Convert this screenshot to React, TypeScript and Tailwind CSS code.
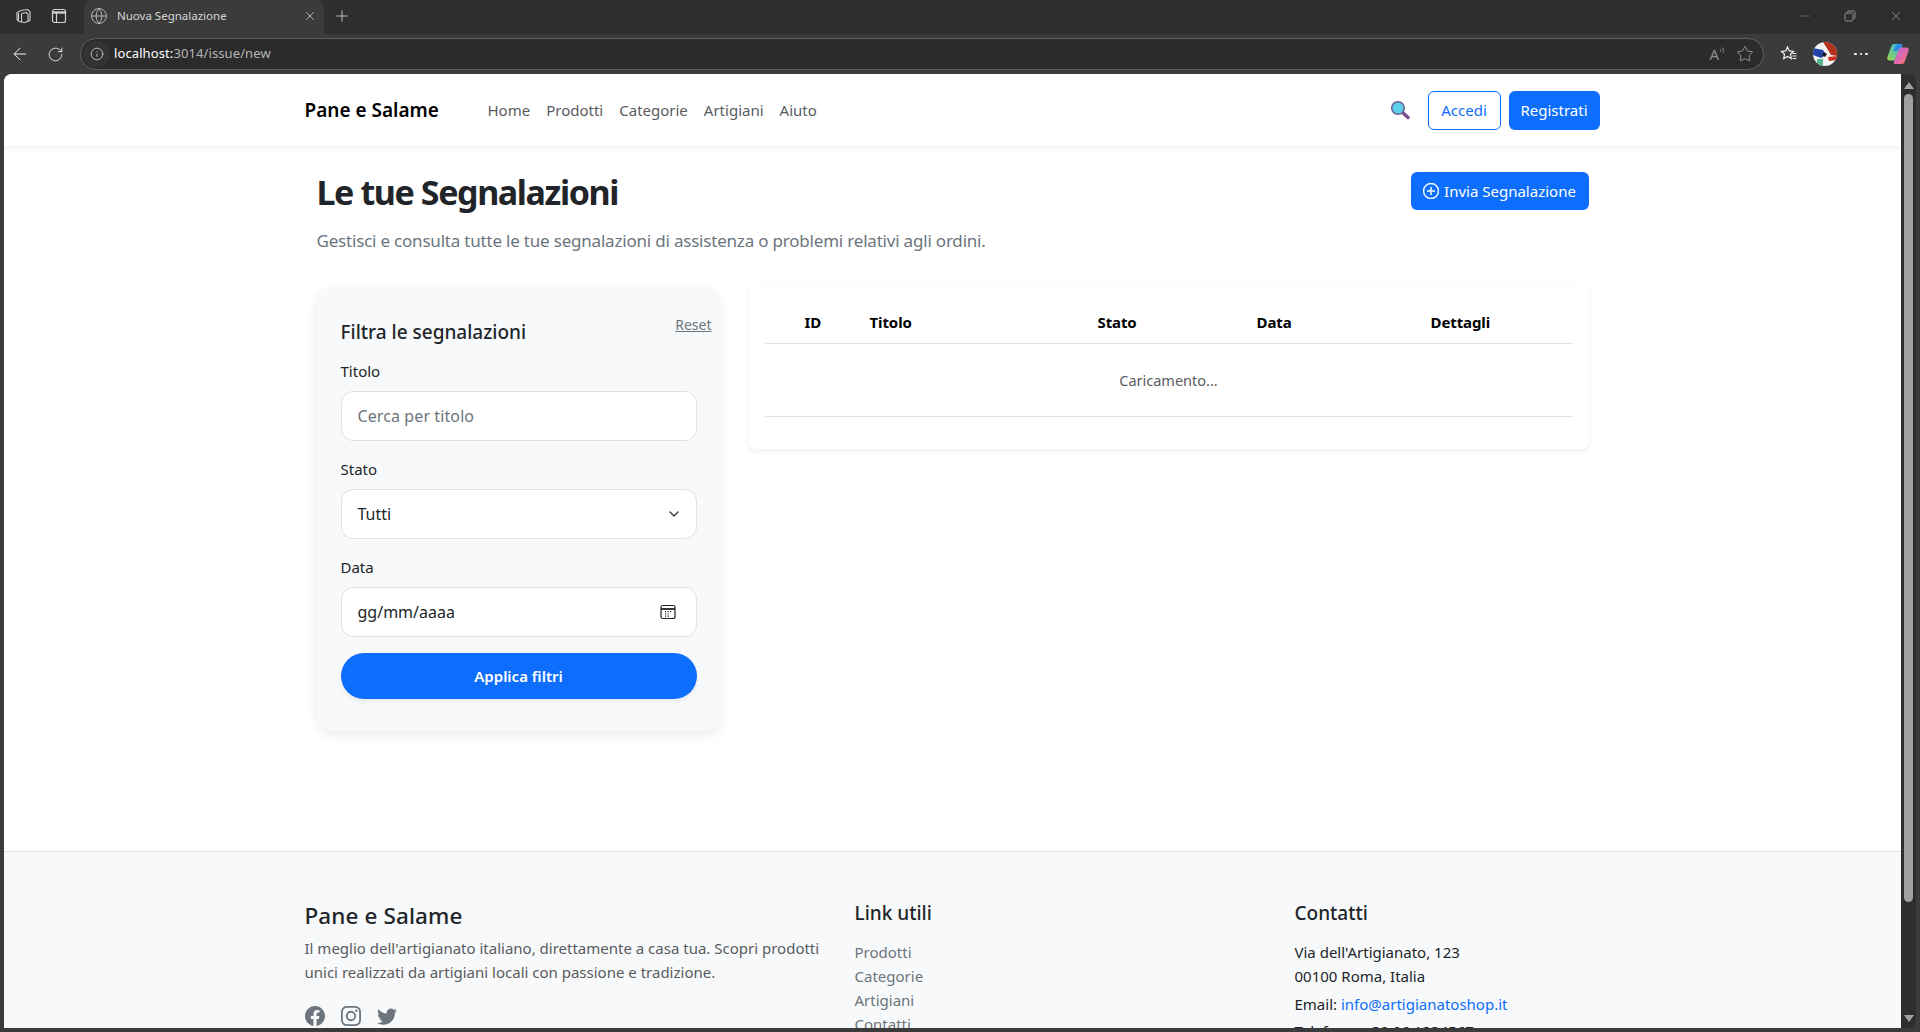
import { ArrowLeft, Globe, Plus, RotateCw, Info, Star, X, Minus, ChevronDown } from "lucide-react";
import { BsFacebook, BsInstagram, BsTwitter, BsPlusCircle } from "react-icons/bs";

const font = { fontFamily: '"Noto Sans", sans-serif' };

function Chrome() {
  return (
    <div className="flex flex-col shrink-0 text-white">
      <div className="h-[34px] bg-[#2e2e2e] flex items-end">
        <div className="w-[84px] h-[34px] flex items-center pl-[15px] pb-[2px] gap-[18px]">
          <svg width="18" height="18" viewBox="0 0 18 18" fill="none" stroke="#cfcfcf" strokeWidth="1.1">
            <path d="M6 3.500l6.500-1 2.500 2v9l-5 2-6-1-2-2v-7z" />
            <path d="M6.500 6.500l5-1 1.500 1.500v8" />
            <path d="M3.500 6v7.500M6.500 6.500v9" />
          </svg>
          <svg width="16" height="16" viewBox="0 0 16 16" fill="none" stroke="#cfcfcf" strokeWidth="1.2">
            <rect x="1.500" y="1.500" width="13" height="13" rx="2" />
            <path d="M1.500 4.500h13" strokeWidth="2.400" />
            <path d="M5.500 5v9.500" />
          </svg>
        </div>
        <div className="w-[240px] h-[34px] bg-[#3b3b3b] rounded-t-[8px] flex items-center pl-[6px] pr-[7px] pb-[2px]">
          <Globe size={18} strokeWidth={1.1} color="#c8c8c8" />
          <span className="ml-[9px] flex-1 text-[11.500px] text-[#d6d6d6]">Nuova Segnalazione</span>
          <X size={14} strokeWidth={1.4} color="#d0d0d0" />
        </div>
        <div className="h-[34px] w-[34px] flex items-center justify-center ml-[1px] pb-[2px]">
          <Plus size={18} strokeWidth={1.1} color="#e0e0e0" />
        </div>
        <div className="flex-1" />
        <div className="flex items-center h-[34px] pr-[16px] gap-[32px] pb-[2px]">
          <Minus size={14} strokeWidth={1} color="#8f8f8f" />
          <svg width="12" height="12" viewBox="0 0 12 12" fill="none" stroke="#8f8f8f" strokeWidth="1">
            <rect x="1" y="3" width="8" height="8" rx="1.200" />
            <path d="M3.500 3V2.200A1.200 1.200 0 0 1 4.700 1H9.600A1.400 1.400 0 0 1 11 2.400V7.300A1.200 1.200 0 0 1 9.800 8.500H9" />
          </svg>
          <X size={16} strokeWidth={1} color="#a8a8a8" />
        </div>
      </div>
      <div className="h-[40px] bg-[#3b3b3b] flex items-center">
        <div className="w-[80px] flex items-center pl-[10px] gap-[17px]">
          <ArrowLeft size={20} strokeWidth={1.2} color="#f0f0f0" />
          <RotateCw size={17} strokeWidth={1.2} color="#f0f0f0" />
        </div>
        <div className="w-[1684px] h-[32px] rounded-full border border-[#5f5f5f] bg-[#2b2b2b] flex items-center pr-[9px]">
          <div className="w-[27px] h-[26px] ml-[2px] rounded-full bg-[#333333] flex items-center justify-center">
            <Info size={14} strokeWidth={1.3} color="#e0e0e0" />
          </div>
          <span className="ml-[4px] text-[13px] text-white tracking-[0.1px]">localhost:<span className="text-[#b4b4b4]">3014/issue/new</span></span>
          <div className="flex-1" />
          <span className="text-[15px] leading-[18px] text-[#8f8f8f]">A</span>
          <svg width="6" height="10" viewBox="0 0 6 10" fill="none" stroke="#8f8f8f" strokeWidth="0.9" className="mb-[6px] mr-[11px]">
            <path d="M1 3c1 .8 1 2 .6 3M3 1.500c1.800 1.500 1.800 4 1 5.500" />
          </svg>
          <Star size={18} strokeWidth={1.2} color="#a0a0a0" />
        </div>
        <div className="flex-1 flex items-center pl-[16px] gap-[15px]">
          <svg width="18" height="18" viewBox="0 0 18 18" fill="none" stroke="#f5f5f5" strokeWidth="1.2">
            <path d="M7.500 2l1.800 3.900 4.200.5-3 2.900.8 4.200-3.800-2.100-3.800 2.100.8-4.200-3-2.900 4.200-.5z" />
            <path d="M12.500 8.500h4M12.500 11h4M12.500 13.500h4" />
          </svg>
          <svg width="24" height="24" viewBox="0 0 24 24">
            <defs><clipPath id="av"><circle cx="12" cy="12" r="12" /></clipPath></defs>
            <g clipPath="url(#av)">
              <rect width="24" height="24" fill="#f2f2f2" />
              <path d="M10 0h14v14l-6-1-3-5z" fill="#b5301c" />
              <path d="M0 6l10 2 3 5-5 3-8-3z" fill="#2244a8" />
              <path d="M4 17l6 0 0 7-6 0z" fill="#58b58e" />
              <path d="M15 15l9-1v4l-8 1z" fill="#c9301f" />
              <path d="M11 10l3 2-2 3-3-2z" fill="#1a1a2a" />
            </g>
          </svg>
          <div className="flex gap-[3px] ml-[2px] mr-[3px]">
            <span className="w-[2.500px] h-[2.500px] bg-white rounded-full" />
            <span className="w-[2.500px] h-[2.500px] bg-white rounded-full" />
            <span className="w-[2.500px] h-[2.500px] bg-white rounded-full" />
          </div>
          <svg width="24" height="24" viewBox="0 0 24 24" fill="none">
            <defs>
              <linearGradient id="c1" x1="0" y1="0" x2="1" y2="1"><stop offset="0" stopColor="#35c1f1" /><stop offset="0.5" stopColor="#2b7fe8" /><stop offset="1" stopColor="#3fd18c" /></linearGradient>
              <linearGradient id="c2" x1="0" y1="0" x2="1" y2="1"><stop offset="0" stopColor="#a86be0" /><stop offset="0.6" stopColor="#e86aa8" /><stop offset="1" stopColor="#f9803a" /></linearGradient>
              <linearGradient id="c3" x1="0" y1="1" x2="1" y2="0"><stop offset="0" stopColor="#9ad84a" /><stop offset="1" stopColor="#2fb6e8" /></linearGradient>
            </defs>
            <path d="M8 2h7c1 0 1.500 1 1.200 1.800L11.500 16c-.6 1.600-1.800 2.600-3.500 2.600H3.500C1.800 18.600.8 17 1.300 15.500L5 5c.6-1.800 1.600-3 3-3z" fill="url(#c3)" />
            <path d="M8 2h7c1 0 1.500 1 1.200 1.800L14 9H7.500L9 4.500C9.300 3.600 8.800 2 8 2z" fill="url(#c1)" />
            <path d="M16 22H9c-1 0-1.500-1-1.200-1.800L12.500 8c.6-1.600 1.800-2.600 3.500-2.600h4.500c1.700 0 2.700 1.600 2.200 3.100L19 19c-.6 1.800-1.600 3-3 3z" fill="url(#c2)" />
          </svg>
        </div>
      </div>
    </div>
  );
}

function Magnifier() {
  return (
    <svg width="20" height="20" viewBox="0 0 20 20">
      <path d="M12.500 12.500l5.500 5" stroke="#7b4a8c" strokeWidth="3.400" strokeLinecap="round" />
      <circle cx="8" cy="8" r="6.300" fill="#5fd0ea" stroke="#6a5f95" strokeWidth="1.500" />
    </svg>
  );
}

function Navbar() {
  return (
    <nav className="h-[72px] shrink-0 bg-white shadow-[0_2px_4px_rgba(0,0,0,0.06)] relative">
      <div className="w-[1320px] mx-auto pl-[12px] pr-[13px] h-full flex items-center">
        <span className="text-[19px] font-semibold text-black w-[183px] pt-[1px]">Pane e Salame</span>
        <div className="flex gap-[16px] text-[15px] text-[#595c5f]">
          <span>Home</span><span>Prodotti</span><span>Categorie</span><span>Artigiani</span><span>Aiuto</span>
        </div>
        <div className="flex-1" />
        <Magnifier />
        <button className="ml-[18px] w-[73px] h-[39px] rounded-[6px] border border-[#0d6efd] text-[#0d6efd] text-[15px]">Accedi</button>
        <button className="ml-[8px] w-[91px] h-[39px] rounded-[6px] bg-[#0d6efd] text-white text-[15px]">Registrati</button>
      </div>
    </nav>
  );
}

function Filters() {
  const field = "w-full h-[50px] rounded-[12px] border border-[#dee2e6] bg-white px-[16px] text-[16px] outline-none";
  return (
    <aside className="w-[404px] h-[444px] shrink-0 bg-[#f8f9fa] rounded-[16px] shadow-[0_4px_12px_rgba(0,0,0,0.08)] pt-[32px] pl-[24px] pr-[24px] relative">
      <a className="absolute top-[27px] right-[9px] text-[14px] text-[#6c757d] underline">Reset</a>
      <h2 className="text-[19px] font-medium text-[#212529] h-[26px] leading-[26px]">Filtra le segnalazioni</h2>
      <div className="mt-[14px] h-[24px] leading-[24px] text-[15px] text-[#212529]">Titolo</div>
      <input readOnly placeholder="Cerca per titolo" className={`${field} mt-[8px] tracking-[0.1px] placeholder:text-[#6c757d]`} />
      <div className="mt-[12px] h-[24px] leading-[24px] text-[15px] text-[#212529] pt-[4px]">Stato</div>
      <div className={`${field} mt-[12px] flex items-center justify-between text-[#212529] pr-[14px]`}>
        <span>Tutti</span>
        <ChevronDown size={16} strokeWidth={2} color="#343a40" />
      </div>
      <div className="mt-[12px] h-[24px] leading-[24px] text-[15px] text-[#212529] pt-[4px]">Data</div>
      <div className={`${field} mt-[12px] flex items-center justify-between text-[#212529] pr-[20px]`}>
        <span>gg/mm/aaaa</span>
        <svg width="16" height="16" viewBox="0 0 16 16" fill="none" stroke="#212529" strokeWidth="1.200">
          <rect x="1" y="1.500" width="14" height="13" rx="2" />
          <path d="M1 5h14" strokeWidth="1.800" />
          <path d="M5 7.700h1.200M7.500 7.700h1.200M10 7.700h1.200M5 10h1.200M7.500 10h1.200M5 12.200h1.200M7.500 12.200h1.200" />
        </svg>
      </div>
      <button className="mt-[16px] w-full h-[46px] rounded-full bg-[#0d6efd] text-white text-[15px] font-semibold shadow-[0_2px_4px_rgba(0,0,0,0.08)]">Applica filtri</button>
    </aside>
  );
}

function IssueTable() {
  const th = "h-[56px] pt-[15px] text-left font-bold text-[15px] text-black border-b border-[#dee2e6] tracking-[-0.1px]";
  return (
    <section className="flex-1 h-[162px] bg-white rounded-[8px] shadow-[0_2px_6px_rgba(0,0,0,0.08)] px-[16px]">
      <table className="w-full table-fixed border-collapse">
        <colgroup>
          <col className="w-[88px]" /><col className="w-[229px]" /><col className="w-[159px]" /><col className="w-[174px]" /><col />
        </colgroup>
        <thead>
          <tr>
            <th className={`${th} pl-[40px]`}>ID</th>
            <th className={`${th} pl-[17px]`}>Titolo</th>
            <th className={`${th} pl-[16px]`}>Stato</th>
            <th className={`${th} pl-[16px]`}>Data</th>
            <th className={`${th} pl-[16px]`}>Dettagli</th>
          </tr>
        </thead>
        <tbody>
          <tr>
            <td colSpan={5} className="h-[73px] pt-[2px] text-center text-[14.500px] text-[#595c5f] border-b border-[#dee2e6]">Caricamento...</td>
          </tr>
        </tbody>
      </table>
    </section>
  );
}

function Main() {
  return (
    <main className="w-[1320px] mx-auto shrink-0 h-[705px] px-[24px] pt-[22px]">
      <div className="flex justify-between items-start h-[119px]">
        <div className="-mt-[1px]">
          <h1 className="text-[34px] leading-[50px] font-bold text-[#212529] tracking-[-1.4px]">Le tue Segnalazioni</h1>
          <p className="mt-[12px] text-[17px] leading-[24px] text-[#6c757d] tracking-[-0.2px]">Gestisci e consulta tutte le tue segnalazioni di assistenza o problemi relativi agli ordini.</p>
        </div>
        <button className="mt-[4px] w-[178px] h-[38px] rounded-[6px] bg-[#0d6efd] text-white text-[15px] flex items-center justify-center gap-[5px]">
          <BsPlusCircle size={16} strokeWidth={0.5} /> Invia Segnalazione
        </button>
      </div>
      <div className="flex gap-[28px]">
        <Filters />
        <IssueTable />
      </div>
    </main>
  );
}

function Footer() {
  return (
    <footer className="flex-1 bg-[#f8f9fa] border-t border-[#dee2e6] min-h-[400px]">
      <div className="w-[1320px] mx-auto pl-[12px] pt-[48px] flex">
        <div className="w-[550px]">
          <h3 className="text-[22.500px] leading-[32px] font-medium text-[#212529] tracking-[0.1px]">Pane e Salame</h3>
          <p className="mt-[4px] w-[530px] text-[15px] leading-[24px] text-[#595c5f]">Il meglio dell'artigianato italiano, direttamente a casa tua. Scopri prodotti unici realizzati da artigiani locali con passione e tradizione.</p>
          <div className="flex gap-[16px] mt-[22px] text-[#6c757d]">
            <BsFacebook size={20} /><BsInstagram size={20} /><BsTwitter size={20} />
          </div>
        </div>
        <div className="w-[440px]">
          <h4 className="mt-[1px] text-[19px] leading-[24px] font-medium text-[#212529]">Link utili</h4>
          <ul className="mt-[15px] text-[15px] leading-[24px] text-[#6c757d]">
            <li>Prodotti</li><li>Categorie</li><li>Artigiani</li><li>Contatti</li>
          </ul>
        </div>
        <div>
          <h4 className="mt-[1px] text-[19px] leading-[24px] font-medium text-[#212529]">Contatti</h4>
          <div className="mt-[15px] text-[15px] leading-[24px] text-[#212529]">
            <div>Via dell'Artigianato, 123</div>
            <div>00100 Roma, Italia</div>
            <div className="mt-[4px]">Email: <span className="text-[#0d6efd]">info@artigianatoshop.it</span></div>
            <div className="mt-[3px]">Telefono: +39 06 1234567</div>
          </div>
        </div>
      </div>
    </footer>
  );
}

function Scrollbar() {
  return (
    <div className="w-[15px] bg-[#2e2e2e] rounded-tr-[8px] rounded-br-[8px] flex flex-col items-center shrink-0">
      <div className="mt-[8px] w-0 h-0 border-l-[5px] border-r-[5px] border-b-[7px] border-l-transparent border-r-transparent border-b-[#a0a0a0]" />
      <div className="mt-[5px] w-[9px] h-[808px] rounded-full bg-[#a0a0a0]" />
      <div className="flex-1" />
      <div className="mb-[6px] w-0 h-0 border-l-[5px] border-r-[5px] border-t-[7px] border-l-transparent border-r-transparent border-t-[#a0a0a0]" />
    </div>
  );
}

export default function App() {
  return (
    <div className="w-[1920px] h-[1032px] bg-[#3b3b3b] flex flex-col overflow-hidden" style={font}>
      <Chrome />
      <div className="flex-1 min-h-0 flex pl-[4px] pr-[4px] pb-[4px]">
        <div className="flex-1 min-w-0 bg-white rounded-tl-[8px] overflow-hidden flex flex-col">
          <Navbar />
          <Main />
          <Footer />
        </div>
        <Scrollbar />
      </div>
    </div>
  );
}
